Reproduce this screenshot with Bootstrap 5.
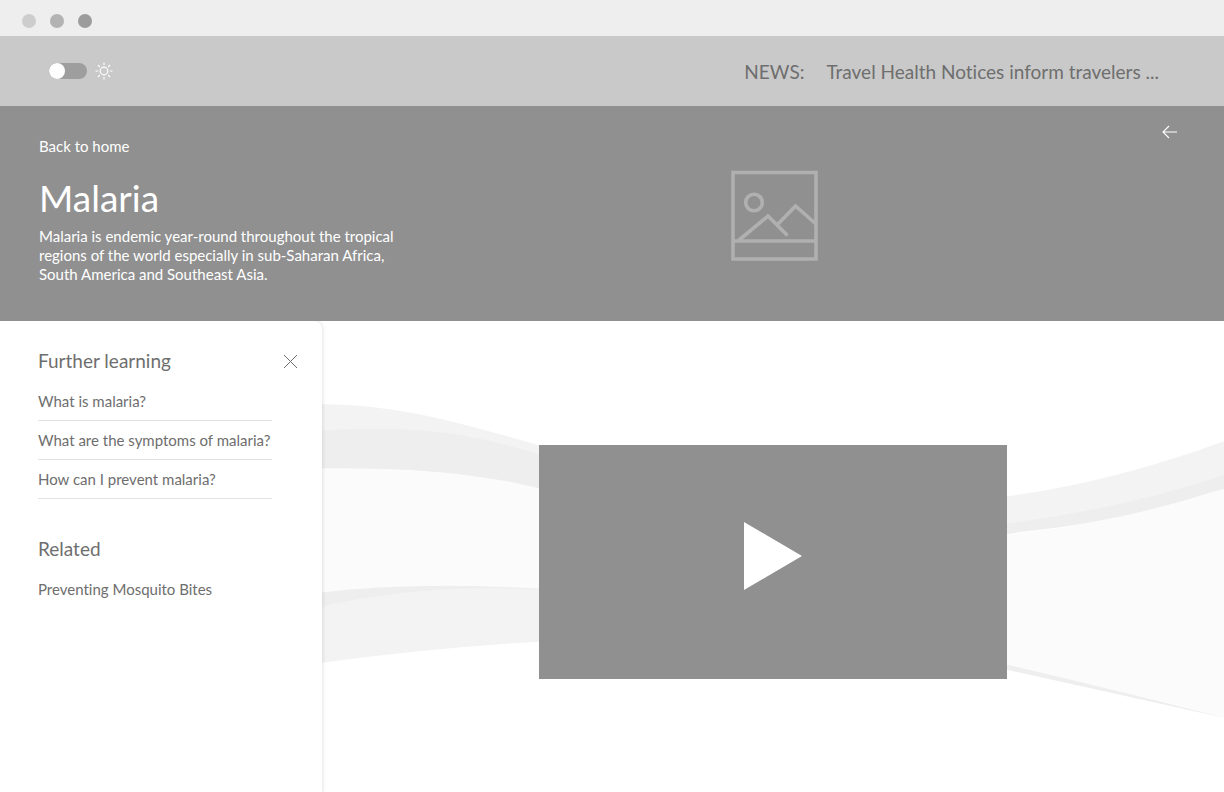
<!DOCTYPE html>
<html lang="en">
<head>
<meta charset="utf-8">
<meta name="viewport" content="width=device-width, initial-scale=1">
<title>Malaria</title>
<link href="https://cdn.jsdelivr.net/npm/bootstrap@5.3.0/dist/css/bootstrap.min.css" rel="stylesheet">
<style>
  body { font-family: Lato, "Open Sans", sans-serif; font-size: 15px; line-height: 19px; font-variant-ligatures: none; color: #6e6e6e; background: #fff; }
  a { color: inherit; text-decoration: none; }
  a:hover { text-decoration: underline; }
  svg { display: block; }

  .window-bar { height: 36px; padding: 5px 22px 0; gap: 14px; background: #eee; }
  .window-dot { width: 14px; height: 14px; border-radius: 50%; background: #cdcdcd; }
  .window-dot.mid { background: #b3b3b3; }
  .window-dot.dark { background: #9c9c9c; }

  .news-bar { height: 70px; padding: 0 65px 0 49px; background: #c9c9c9; }
  .theme-switch .form-check-input { --bs-form-switch-bg: url("data:image/svg+xml,%3Csvg xmlns='http://www.w3.org/2000/svg' viewBox='-4 -4 8 8'%3E%3Ccircle r='4' fill='%23fff'/%3E%3C/svg%3E"); width: 38px; height: 16px; margin: 0; float: none; border: 0; background-color: #9e9e9e; }
  .news-text { font-size: 19px; line-height: 24px; padding-top: 2px; gap: 22px; }

  .hero { background: #909090; color: #fff; min-height: 215px; }
  .hero-copy { width: 414px; padding: 31px 0 0 39px; }
  .hero-copy h1 { font-size: 37px; line-height: 46px; font-weight: 400; margin: 19px 0 6px; }
  .hero-tools { width: 90px; padding: 19px 47px 0 0; }
  .plain-btn { padding: 0; border: 0; background: none; color: inherit; }

  .further { width: 322px; padding: 28px 24px 0 38px; border-radius: 0 8px 0 0; background: #fff; box-shadow: 0 0 4px rgba(0, 0, 0, .16); clip-path: inset(0 -8px 0 0); z-index: 1; }
  .further h2 { font-size: 19px; line-height: 24px; font-weight: 400; margin: 0; }
  .topics { width: 234px; margin: 9px 0 0; }
  .topics li { padding: 10px 0; border-bottom: 1px solid #e2e2e2; line-height: 18px; white-space: nowrap; }
  .further .related { margin: 38px 0 19px; }

  .stage { padding: 124px 0 114px; }
  .waves { inset: 0; }
  .video { width: 52%; max-width: 468px; aspect-ratio: 2 / 1; border-radius: 0; background: #909090; }
</style>
</head>
<body class="d-flex flex-column min-vh-100">
  <div class="window-bar d-flex align-items-center">
    <span class="window-dot"></span><span class="window-dot mid"></span><span class="window-dot dark"></span>
  </div>

  <header class="news-bar d-flex align-items-center justify-content-between">
    <div class="theme-switch form-switch d-flex align-items-center gap-2 p-0">
      <input class="form-check-input" type="checkbox" role="switch" id="theme">
      <label for="theme" aria-label="Light theme">
        <svg width="18" height="18" viewBox="0 0 18 18" fill="none" stroke="#fff" stroke-width="1.2" stroke-linecap="round">
          <circle cx="9" cy="9" r="3.8"/>
          <path d="M9 1v1.6M9 15.4V17M1 9h1.6M15.4 9H17M3.3 3.3l1.2 1.2M13.5 13.5l1.2 1.2M3.3 14.7l1.2-1.2M13.5 4.5l1.2-1.2"/>
        </svg>
      </label>
    </div>
    <div class="news-text d-flex">
      <span>NEWS:</span>
      <a href="#">Travel Health Notices inform travelers ...</a>
    </div>
  </header>

  <section class="hero d-flex">
    <div class="hero-copy flex-shrink-0">
      <a class="d-block" href="#">Back to home</a>
      <h1>Malaria</h1>
      <p class="mb-0">Malaria is endemic year-round throughout the tropical<br>regions of the world especially in sub-Saharan Africa,<br>South America and Southeast Asia.</p>
    </div>
    <div class="flex-grow-1 d-flex align-items-center justify-content-center pt-1">
      <svg width="88" height="92" viewBox="0 0 88 92" fill="none" stroke="#b0b0b0" stroke-width="3.6" role="img" aria-label="Image">
        <path d="M3 2.500h83v86.500H3zM3 71h83"/>
        <circle cx="24" cy="32.500" r="8.300"/>
        <path d="M8.500 70.500L38 46 57.500 65.500M48 54L65.500 36 86 54"/>
      </svg>
    </div>
    <div class="hero-tools d-flex justify-content-end align-items-start">
      <button class="plain-btn" type="button" aria-label="Go back">
        <svg width="15" height="14" viewBox="0 0 15 14" fill="none" stroke="#fff" stroke-width="1.1"><path d="M15 7H1M7 1L1 7l6 6"/></svg>
      </button>
    </div>
  </section>

  <div class="d-flex flex-grow-1">
    <aside class="further flex-shrink-0">
      <div class="d-flex justify-content-between align-items-center">
        <h2>Further learning</h2>
        <button class="plain-btn" type="button" aria-label="Close">
          <svg width="15" height="15" viewBox="0 0 15 15" fill="none" stroke="#6e6e6e" stroke-width="1"><path d="M1 1l13 13M14 1L1 14"/></svg>
        </button>
      </div>
      <ul class="topics list-unstyled">
        <li><a href="#">What is malaria?</a></li>
        <li><a href="#">What are the symptoms of malaria?</a></li>
        <li><a href="#">How can I prevent malaria?</a></li>
      </ul>
      <h2 class="related">Related</h2>
      <a href="#">Preventing Mosquito Bites</a>
    </aside>

    <main class="stage position-relative flex-grow-1 d-flex justify-content-center align-items-start">
      <svg class="waves position-absolute w-100 h-100" viewBox="0 0 902 471" preserveAspectRatio="none" aria-hidden="true">
        <!-- pale body of the ribbon -->
        <path fill="#fbfbfb" d="M0 147C75 146 150 150 217 166L450 240 685 213Q798 202 902 167V396L685 344 217 267Q100 259 0 272z"/>
        <!-- upper left bands -->
        <path fill="#f3f3f3" d="M0 83C75 83 140 102 217 124V166C150 150 75 146 0 147z"/>
        <path fill="#eee" d="M0 109C100 105 140 110 217 133V167C150 150 75 146 0 147z"/>
        <!-- lower left bands -->
        <path fill="#eee" d="M0 271Q90 260 217 267V290H0z"/>
        <path fill="#f3f3f3" d="M0 285Q100 262 217 268V320Q110 326 0 341z"/>
        <!-- upper right bands -->
        <path fill="#f3f3f3" d="M685 175Q790 161 902 120V168L685 213z"/>
        <path fill="#eee" d="M685 202Q798 188 902 154V167Q798 202 685 212z"/>
        <!-- lower right edge -->
        <path fill="#eee" d="M685 343Q800 370 902 396Q785 370 685 348z"/>
      </svg>
      <button class="video plain-btn position-relative d-flex align-items-center justify-content-center" type="button" aria-label="Play video">
        <svg width="60" height="80" viewBox="0 0 60 80"><path fill="#fff" d="M1 0l58 34L1 68z"/></svg>
      </button>
    </main>
  </div>
<script src="https://cdn.jsdelivr.net/npm/bootstrap@5.3.0/dist/js/bootstrap.bundle.min.js"></script>
</body>
</html>
